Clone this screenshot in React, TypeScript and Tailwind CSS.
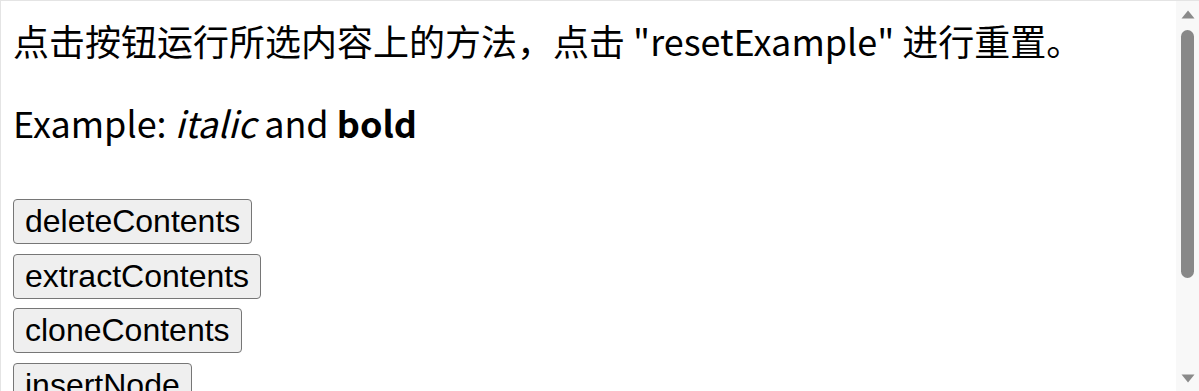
const methods = [
  'deleteContents',
  'extractContents',
  'cloneContents',
  'insertNode',
  'surroundContents',
  'resetExample',
];

function Scrollbar() {
  return (
    <div className="flex w-[23px] shrink-0 flex-col items-center bg-[#f8f8f8]">
      {/* up arrow */}
      <svg className="mt-[9px]" width="14" height="9" viewBox="0 0 14 9">
        <path d="M7 0.5 L13.5 8.5 L0.5 8.5 Z" fill="#8a8a8a" />
      </svg>
      {/* thumb */}
      <div className="mt-[11px] h-[248px] w-[13px] rounded-full bg-[#888888]" />
      {/* down arrow */}
      <svg className="mt-auto mb-[8px]" width="14" height="9" viewBox="0 0 14 9">
        <path d="M0.5 0.5 L13.5 0.5 L7 8.5 Z" fill="#8a8a8a" />
      </svg>
    </div>
  );
}

export default function App() {
  return (
    <div className="flex h-[391px] w-[1199px] overflow-hidden border-t border-l border-[#e4e4e4] bg-white">
      <div className="min-w-0 flex-1 overflow-hidden pt-[16px] pl-[12px] font-['Noto_Sans_CJK_SC',sans-serif] text-[36px] leading-[46px] text-black">
        <p className="whitespace-nowrap">
          点击按钮运行所选内容上的方法，点击 "resetExample" 进行重置。
        </p>
        <p className="mt-[36px]">
          Example: <i>italic</i> and <b>bold</b>
        </p>
        <div className="mt-[54px] flex flex-col items-start gap-[9.5px]">
          {methods.map((m) => (
            <button
              key={m}
              type="button"
              className="rounded-[4px] border border-[#767676] bg-[#efefef] px-[11px] py-[3px] font-['Liberation_Sans',Arial,sans-serif] text-[32px] leading-[37px] text-black"
            >
              {m}
            </button>
          ))}
        </div>
      </div>
      <Scrollbar />
    </div>
  );
}
